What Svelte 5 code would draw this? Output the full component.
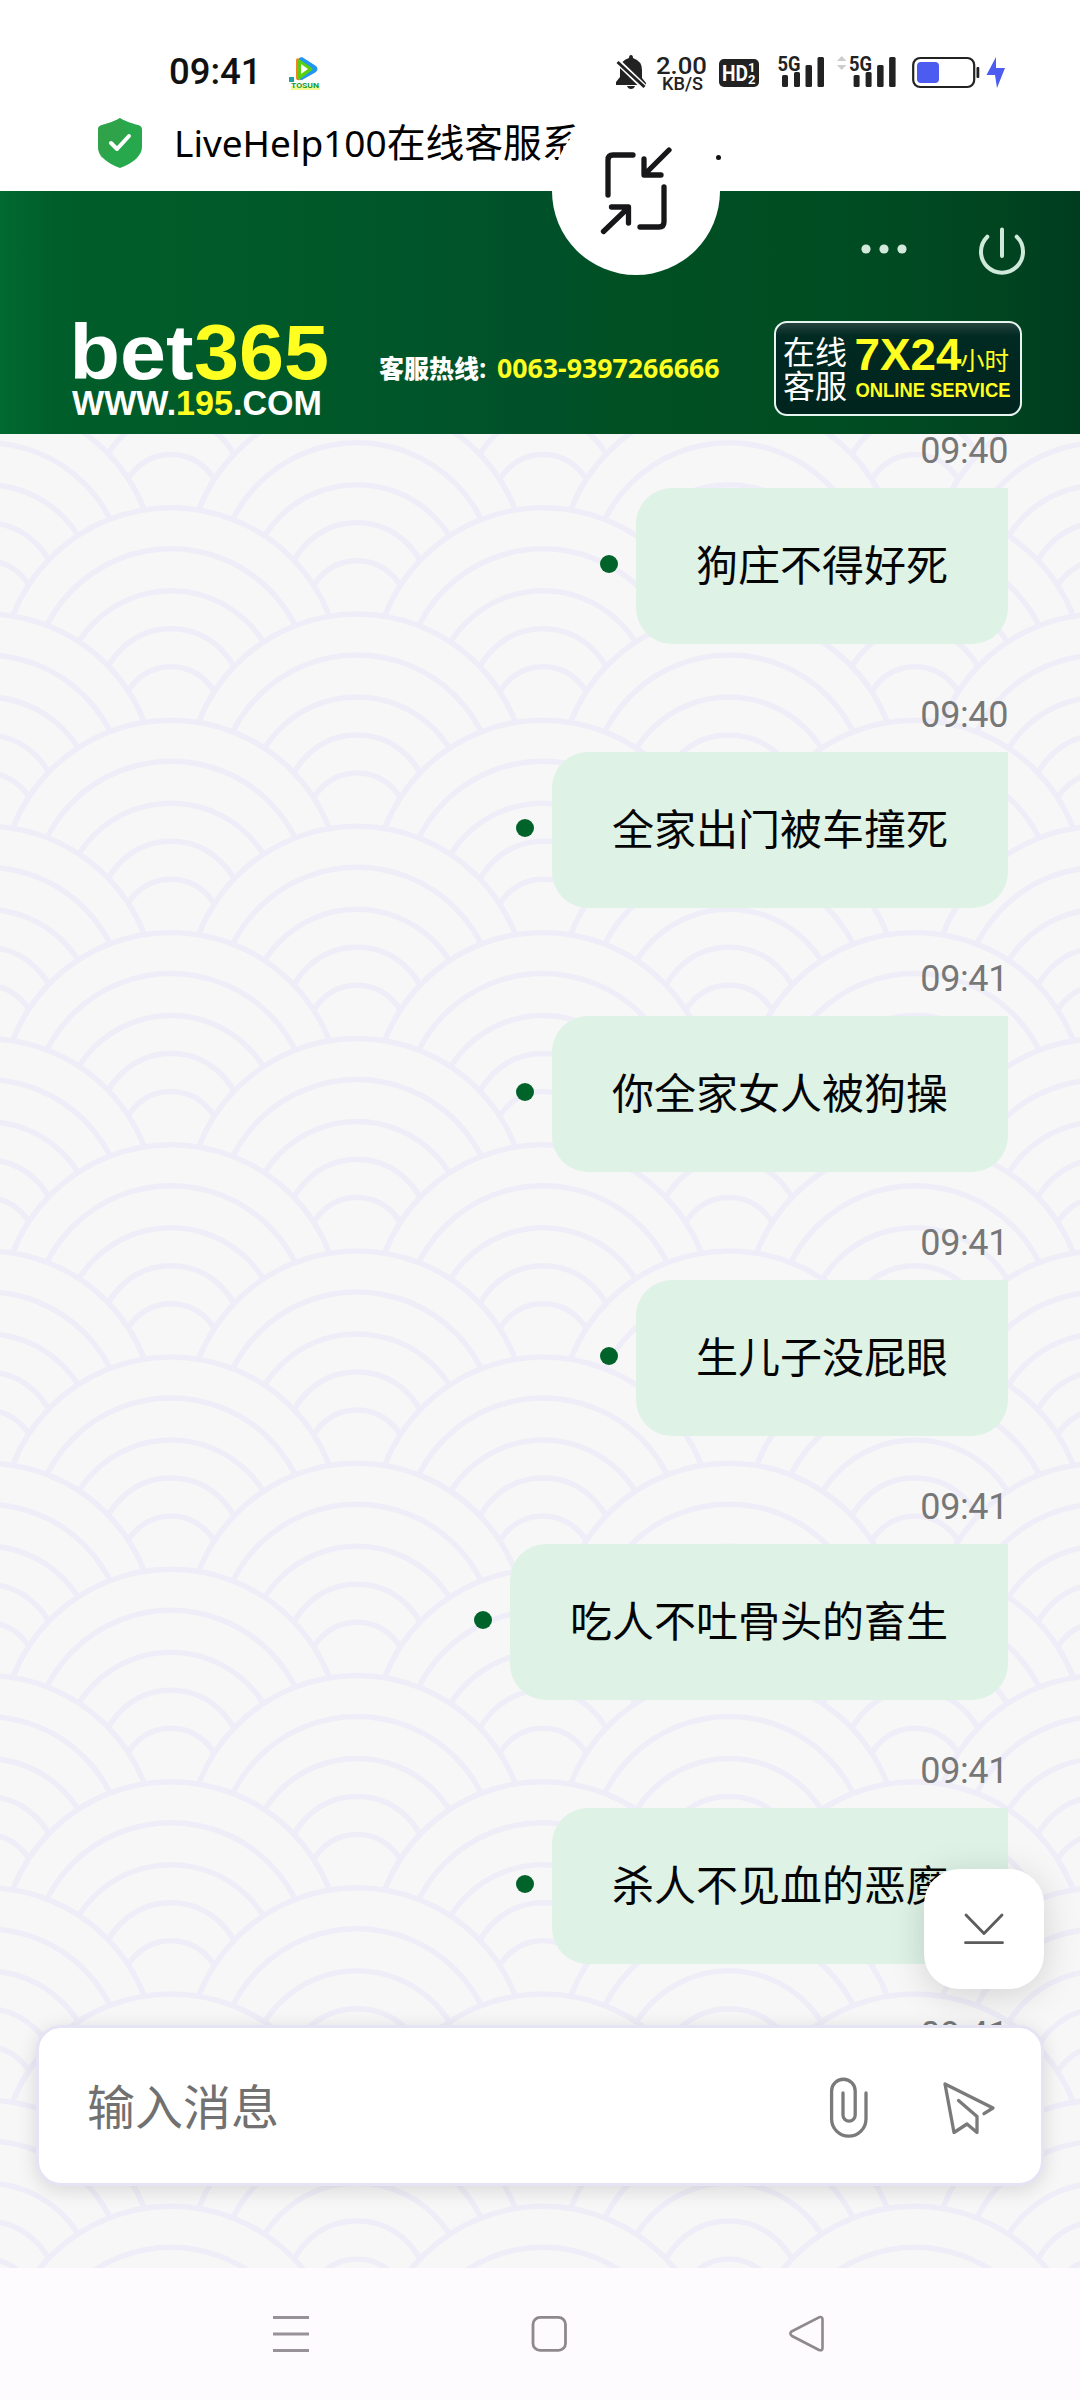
<script>
  const messages = [
    { time: '09:40', text: '狗庄不得好死' },
    { time: '09:40', text: '全家出门被车撞死' },
    { time: '09:41', text: '你全家女人被狗操' },
    { time: '09:41', text: '生儿子没屁眼' },
    { time: '09:41', text: '吃人不吐骨头的畜生' },
    { time: '09:41', text: '杀人不见血的恶魔' },
    { time: '09:41', text: '' }
  ];

  // Seigaiha wave wallpaper: half-offset columns, painted from top to bottom.
  const PERIOD = 212.3;
  const rings = [
    { top: 0, r: 170 },
    { top: 41, r: 139 },
    { top: 83, r: 109 },
    { top: 121, r: 71 },
    { top: 159, r: 50 }
  ];
  const columns = [-14, 171, 357, 543, 729, 915, 1101];
  const waves = [];
  for (let row = -3; row < 18; row++) {
    columns.forEach((x, i) => {
      if (Math.abs(row % 2) === i % 2) {
        waves.push({ x, y: 614 - 434 + (row * PERIOD) / 2 });
      }
    });
  }
</script>

<div class="phone">
  <header class="top">
    <div class="status">
      <span class="clock">09:41</span>
      <svg class="app" width="34" height="36" viewBox="287 56 34 36">
        <path d="M296 60q0-3 4-1l14 9q3 2 0 5l-14 7q-4 1-4-2z" fill="#f58220" />
        <path d="M299 58l3-1 14 9q3 3 0 6l-14 8q-4 0-2-4z" fill="#2196f3" />
        <path d="M299 61l12 8-12 9z" fill="#58d010" stroke="#58d010" stroke-width="3" stroke-linejoin="round" />
        <path d="M301 64l7 5-7 5z" fill="#fff" />
        <path d="M289 77h5v5h-5z" fill="#20a0a0" />
        <rect x="291" y="86" width="29" height="4" fill="#f5fa90" />
        <text x="291" y="88" font-size="7" font-weight="700" fill="#159a30" textLength="28" lengthAdjust="spacingAndGlyphs">TOSUN</text>
      </svg>
      <svg class="indicators" width="394" height="40" viewBox="614 52 394 40">
        <g fill="#222">
          <path d="M631 55q2 0 2 3 9 3 9 12v8l4 5v2h-30v-3l4-5v-8q1-9 9-11 0-3 2-3zM627 86h8q-1 3-4 3t-4-3z" />
          <path d="M616 60l30 29" stroke="#fff" stroke-width="6" />
          <path d="M617.500 62L644.500 87" stroke="#222" stroke-width="3" />
          <text x="656" y="74" font-size="23.500" font-weight="500" textLength="51" lengthAdjust="spacingAndGlyphs">2.00</text>
          <text x="662" y="90" font-size="18" font-weight="500" textLength="41" lengthAdjust="spacingAndGlyphs">KB/S</text>
          <rect x="719" y="59" width="40" height="28" rx="5" />
        </g>
        <g fill="#fff" font-weight="700">
          <text x="722" y="81" font-size="22" textLength="26" lengthAdjust="spacingAndGlyphs">HD</text>
          <text x="748" y="72" font-size="13">1</text>
          <text x="748" y="84" font-size="13">2</text>
        </g>
        {#each [0, 71.6] as dx}
          <g fill="#222" transform="translate({dx} 0)">
            <text x="777.500" y="70.500" font-size="21" font-weight="700" textLength="23" lengthAdjust="spacingAndGlyphs">5G</text>
            <rect x="782" y="75" width="6" height="12" rx="1.500" />
            <rect x="794" y="72" width="6" height="15" rx="1.500" />
            <rect x="805.500" y="65" width="6.500" height="22" rx="1.500" />
            <rect x="817.500" y="57" width="6.500" height="30" rx="1.500" />
          </g>
        {/each}
        <path d="M837 61l4.700-5 4.700 5zM837 65l4.700 5 4.700-5z" fill="#ccc" />
        <rect x="913.200" y="58" width="61" height="29" rx="7" fill="none" stroke="#222" stroke-width="2.200" />
        <rect x="917" y="62" width="22" height="21" rx="4" fill="#4c5cf0" />
        <rect x="976.500" y="67" width="2.800" height="11" rx="1" fill="#222" />
        <path d="M996 57l-9.500 18h8.500l2 13 8-20h-9z" fill="#4c5cf0" />
      </svg>
    </div>
    <div class="titlebar">
      <svg width="44" height="50" viewBox="0 0 44 50">
        <path d="M22 0c3 2 10 5 18 7 3 1 4 2 4 5v17c0 8-8 16-22 21C8 45 0 37 0 29V12c0-3 1-4 4-5 8-2 15-5 18-7z" fill="#27a84c" />
        <path d="M22 0l8 18-26 22C1 36 0 33 0 29V12c0-3 1-4 4-5 8-2 15-5 18-7z" fill="#33a04a" opacity=".6" />
        <path d="M13 25l6 6 12-13" fill="none" stroke="#fff" stroke-width="4" stroke-linecap="round" stroke-linejoin="round" />
      </svg>
      <h1><span class="latin">LiveHelp100</span><span>在线客服系统</span></h1>
      <span class="dot-end"></span>
    </div>
    <button class="shrink" aria-label="缩小">
      <svg width="168" height="168" viewBox="552 107 168 168" fill="none" stroke="#17171a" stroke-width="5.300" stroke-linecap="round" stroke-linejoin="round">
        <path d="M633 155H613q-5 0-5 5v35M664 187v35q0 5-5 5H640M669 150L645 174M644 159v16h17M603.500 231.500L628 208M611.500 207h17v16" />
      </svg>
    </button>
  </header>

  <section class="banner">
    <div class="actions">
      <svg width="48" height="12" viewBox="0 0 48 12" fill="#d3e9dc">
        <circle cx="6" cy="6" r="4.600" /><circle cx="24" cy="6" r="4.600" /><circle cx="42" cy="6" r="4.600" />
      </svg>
      <svg width="48" height="50" viewBox="978 226 48 50" fill="none" stroke="#cfe9da" stroke-width="4" stroke-linecap="round">
        <path d="M987.300 236.700A21 21 0 1 0 1016.700 236.700M1002 229.500V256" />
      </svg>
    </div>
    <div class="brand">
      <svg class="logo" width="260" height="104" viewBox="70 316 260 104" font-weight="700">
        <text y="379" font-size="78">
          <tspan x="69.500" fill="#fff" textLength="124" lengthAdjust="spacingAndGlyphs">bet</tspan><tspan x="194" fill="#ff2" textLength="135" lengthAdjust="spacingAndGlyphs">365</tspan>
        </text>
        <text x="72" y="415" font-size="35.500" fill="#fff" textLength="250" lengthAdjust="spacingAndGlyphs">WWW.<tspan fill="#ff2">195</tspan>.COM</text>
      </svg>
      <svg class="hotline" width="345" height="36" viewBox="377 352 345 36">
        <text class="cjk" x="379" y="380" font-size="25" font-weight="900" fill="#fff" textLength="100" lengthAdjust="spacingAndGlyphs">客服热线</text>
        <text class="hot" x="479" y="380" font-size="26" font-weight="700" fill="#fff">:</text>
        <text class="hot" x="497" y="380" font-size="27.500" font-weight="700" fill="#ff2" textLength="222.500" lengthAdjust="spacingAndGlyphs">0063-9397266666</text>
      </svg>
      <div class="badge">
        <svg width="244" height="91" viewBox="775.500 325 244 91">
          <g class="cjk" fill="#fff" font-size="32">
            <text x="782.500" y="365.500" textLength="64">在线</text>
            <text x="782.500" y="399.500" textLength="64">客服</text>
          </g>
          <g fill="#ff2">
            <text x="854" y="371.500" font-size="44" font-weight="700" textLength="107" lengthAdjust="spacingAndGlyphs">7X24</text>
            <text class="cjk" x="959.500" y="372" font-size="24.500" textLength="49">小时</text>
            <text x="855" y="399" font-size="19.500" font-weight="700" textLength="155" lengthAdjust="spacingAndGlyphs">ONLINE SERVICE</text>
          </g>
        </svg>
      </div>
    </div>
  </section>

  <main class="chat">
    <svg class="waves" width="1080" height="1834" viewBox="0 0 1080 1834">
      {#each waves as w}
        <g>
          {#each rings as ring}
            <circle cx={w.x} cy={w.y + ring.top + ring.r} r={ring.r} />
          {/each}
        </g>
      {/each}
    </svg>

    <div class="list">
      {#each messages as m}
        <article>
          <time>{m.time}</time>
          {#if m.text}
            <div class="line">
              <i></i>
              <p>{m.text}</p>
            </div>
          {/if}
        </article>
      {/each}
    </div>

    <button class="down" aria-label="到底部">
      <svg width="44" height="36" viewBox="0 0 44 36" fill="none" stroke="#5c5c5c" stroke-width="2.800" stroke-linecap="round" stroke-linejoin="round">
        <path d="M4 4l18 18.500L40 4M3.500 31.700h37" />
      </svg>
    </button>

    <div class="composer">
      <span class="placeholder">输入消息</span>
      <svg width="42" height="62" viewBox="828 2080 42 62" fill="none" stroke="#7a7a7a" stroke-width="3.300" stroke-linecap="round">
        <path d="M866 2096v26a17.200 17.200 0 0 1-34.400 0v-28a11.800 11.800 0 0 1 23.600 0v24a6.100 6.100 0 0 1-12.200 0v-22" />
      </svg>
      <svg width="54" height="54" viewBox="942 2084 54 54" fill="none" stroke="#7a7a7a" stroke-width="3.300" stroke-linecap="round" stroke-linejoin="round">
        <path d="M984 2116.700L993 2111 945 2087l9 48.500 13-8.500 10 8.500v-16L958.500 2103.500" />
      </svg>
    </div>
  </main>

  <nav>
    <svg width="38" height="38" viewBox="0 0 38 38" fill="none" stroke="#979297" stroke-width="3"><path d="M1 2.500h36M1 19h36M1 35.500h36" /></svg>
    <svg width="38" height="38" viewBox="0 0 38 38" fill="none" stroke="#8d898d" stroke-width="2.800"><rect x="3" y="2.400" width="32.500" height="33" rx="7" /></svg>
    <svg width="38" height="38" viewBox="0 0 38 38" fill="none" stroke="#8d898d" stroke-width="2.600" stroke-linejoin="round"><path d="M3.500 16.500L31 2.300q3.500-1 3.500 2V33q0 3-3.500 2L4 21q-3-2.500-.5-4.500z" /></svg>
  </nav>
</div>

<style>
  :global(body) { margin: 0; }
  .phone {
    width: 1080px; height: 2400px; display: flex; flex-direction: column;
    background: #fff; overflow: hidden;
    font-family: Roboto, "Noto Sans CJK SC", sans-serif;
  }
  svg { display: block; flex: none; }
  button { border: 0; padding: 0; display: flex; align-items: center; justify-content: center; }
  .cjk { font-family: "Noto Sans CJK SC", sans-serif; }

  .top { position: relative; height: 191px; box-sizing: border-box; padding-top: 52px; flex: none; }
  .status { display: flex; align-items: center; height: 40px; padding: 0 72px 0 169px; }
  .clock { font-size: 36.5px; font-weight: 500; color: #111; width: 118px; line-height: 40px; }
  .app { margin-top: 4px; }
  .indicators { margin-left: auto; }
  .titlebar { display: flex; align-items: center; height: 50px; margin-top: 26px; padding-left: 98px; }
  h1 {
    margin: 0 0 0 32px; display: flex; align-items: baseline; white-space: nowrap; overflow: hidden;
    font-size: 38.8px; line-height: 56px; font-weight: 400; color: #000; width: 430px;
  }
  .latin { width: 221px; font-family: "Noto Sans", sans-serif; font-size: 37px; }
  .dot-end { width: 5px; height: 5px; border-radius: 50%; background: #111; margin: 28px 0 0 112px; }
  .shrink {
    position: absolute; left: 552px; top: 107px; z-index: 3; width: 168px; height: 168px;
    border-radius: 50%; background: #fff;
  }

  .banner {
    height: 243px; flex: none; display: flex; flex-direction: column;
    background: linear-gradient(90deg, #006a30 0, #005e2a 5%, #005829 30%, #00502a 51%, #005023 58%, #004c22 80%, #004420 93%, #003d20 100%);
  }
  .actions { display: flex; align-items: center; justify-content: flex-end; gap: 70px; padding: 35px 54px 0 0; }
  .actions svg:first-child { margin-top: -4px; }
  .brand { display: flex; align-items: center; margin-top: 40px; padding-left: 70px; height: 104px; }
  .logo, .badge { font-family: "Liberation Sans", sans-serif; }
  .hotline { margin-left: 47px; }
  .hot { font-family: "Open Sans", sans-serif; }
  .badge {
    margin-left: 51.5px; box-sizing: border-box; width: 248px; height: 95px;
    border: 2px solid #e6f5f0; border-radius: 13px;
    background: linear-gradient(#27443f 0, #002a22 14%, #00241e 100%);
  }

  .chat { position: relative; height: 1834px; flex: none; background: #f7f7f7; overflow: hidden; }
  .waves { position: absolute; inset: 0; }
  .waves circle { fill: #f7f7f7; stroke: #efeef8; stroke-width: 5.5; }
  .list { position: relative; height: 1594px; overflow: hidden; }
  article {
    height: 264px; position: relative; top: -8px;
    display: flex; flex-direction: column; align-items: flex-end; padding-right: 72px;
  }
  time { height: 50px; line-height: 50px; margin-bottom: 12px; font-size: 36px; letter-spacing: -.4px; color: #777; }
  .line { display: flex; align-items: center; gap: 18px; }
  i { width: 18px; height: 18px; border-radius: 50%; background: #00642a; margin-top: -4px; }
  p {
    margin: 0; height: 156px; box-sizing: border-box; padding: 0 60px;
    border-radius: 36px 0 36px 36px; background: #def2e6; color: #050505;
    font: 42px/150px "Noto Sans CJK SC", sans-serif;
  }
  .down {
    position: absolute; left: 924px; top: 1435px; width: 120px; height: 120px;
    border-radius: 35px; background: #fff; box-shadow: 0 6px 36px rgba(0, 0, 0, .15);
  }
  .composer {
    position: relative; box-sizing: border-box; width: 1008px; height: 161px; margin: -3px 36px 0;
    border: 3px solid #e5e4f4; border-radius: 25px; background: #fff;
    display: flex; align-items: center; padding: 4px 45px 0 48px;
    box-shadow: 0 4px 20px rgba(0, 0, 0, .13);
  }
  .placeholder { flex: 1; font: 48px/70px "Noto Sans CJK SC", sans-serif; color: #717171; margin-top: -8px; }
  .composer svg:last-child { margin-left: 72px; }

  nav { flex: 1; display: flex; background: #fdfbfe; padding: 47px 144px 0 162px; }
  nav svg { margin: 0 110px; }
</style>
